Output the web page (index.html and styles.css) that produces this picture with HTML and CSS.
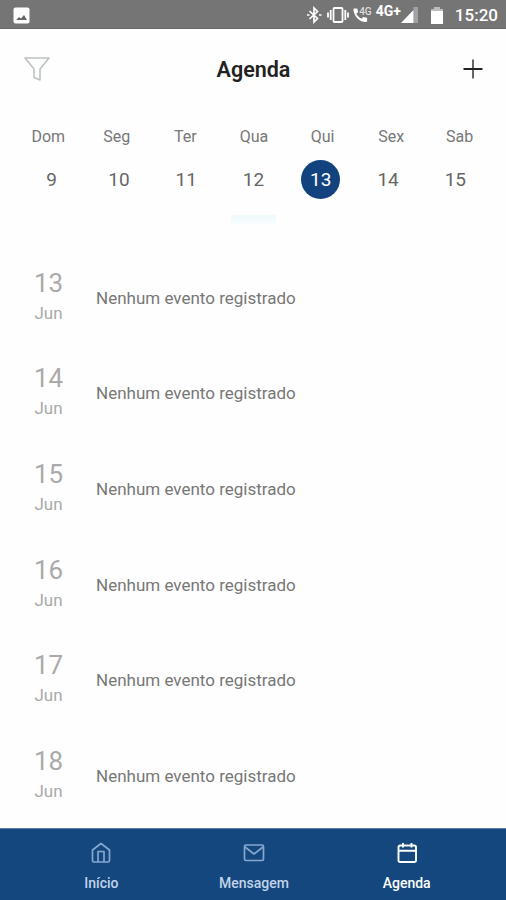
FILE: index.html
```html
<!DOCTYPE html>
<html lang="pt-BR">
<head>
	<meta charset="UTF-8">
	<meta name="viewport" content="width=device-width, initial-scale=1.0">
	<title>Agenda</title>
	<link rel="stylesheet" href="styles.css">
</head>
<body>
	<div class="app">
		<div class="status-bar">
			<svg class="icon-image" width="17" height="17" viewBox="0 0 17 17">
				<rect x="0.5" y="0.5" width="16" height="16" rx="2" fill="#fff"/>
				<path d="M3 13l3-3 2 1.500 3-3.500 3 5z" fill="#666"/>
			</svg>
			<svg class="icon-bluetooth" width="16" height="18" viewBox="0 0 16 18" fill="none" stroke="#fff" stroke-width="1.7">
				<path d="M3.5 5l8 7.5L8 16V2l3.500 3.500-8 7.500"/>
				<path d="M1 9h2.500M13 9h2.500"/>
			</svg>
			<svg class="icon-vibrate" width="22" height="18" viewBox="0 0 22 18" fill="none" stroke="#fff" stroke-width="1.8">
				<rect x="6.500" y="2" width="9" height="14" rx="1"/>
				<path d="M3.700 4v10M18.300 4v10M1 6.500v5M21 6.500v5"/>
			</svg>
			<svg class="icon-call" width="16" height="16" viewBox="0 0 17 17">
				<path d="M1.500 1.500h3l1 4-2 1.500c1.200 2.600 3 4.400 5.500 5.500l1.800-2 4.200 1v3c0 1-.6 1.500-1.500 1.500C6.500 16 1 9.500.5 3c0-1 .3-1.500 1-1.500z" fill="#fff"/>
			</svg>
			<span class="call-type">4G</span>
			<span class="network">4G+</span>
			<svg class="icon-signal" width="17" height="16" viewBox="0 0 17 16">
				<path d="M12.500 0H17v16h-4.500z" fill="#a2a2a2"/>
				<path d="M0 16L12.500 3v13z" fill="#fff"/>
			</svg>
			<svg class="icon-battery" width="12" height="17" viewBox="0 0 12 17">
				<path d="M3.500 0h5v2H12v15H0V2h3.500z" fill="#fff"/>
				<path d="M3.500 0h5v2H12v2H0V2h3.500z" fill="#bdbdbd"/>
			</svg>
			<span class="clock">15:20</span>
		</div>

		<header class="header">
			<svg class="icon-filter" width="26" height="24" viewBox="0 0 26 24" fill="none" stroke="#bcc1c2" stroke-width="1.6" stroke-linejoin="round">
				<path d="M1 1h24l-9 11v11l-6-2.500V12z"/>
			</svg>
			<h1 class="title">Agenda</h1>
			<svg class="icon-add" width="20" height="20" viewBox="0 0 20 20" fill="none" stroke-width="2">
				<path d="M10 0.500v19" stroke="#666"/>
				<path d="M0.500 10h19" stroke="#222"/>
			</svg>
		</header>

		<div class="weekdays">
			<span>Dom</span><span>Seg</span><span>Ter</span><span>Qua</span><span>Qui</span><span>Sex</span><span>Sab</span>
		</div>
		<div class="dates">
			<span class="date">9</span>
			<span class="date">10</span>
			<span class="date">11</span>
			<span class="date">12</span>
			<span class="date selected">13</span>
			<span class="date">14</span>
			<span class="date">15</span>
		</div>
		<div class="knob"></div>

		<main class="events">
			<div class="event">
				<div class="day"><span class="number">13</span><span class="month">Jun</span></div>
				<p class="message">Nenhum evento registrado</p>
			</div>
			<div class="event">
				<div class="day"><span class="number">14</span><span class="month">Jun</span></div>
				<p class="message">Nenhum evento registrado</p>
			</div>
			<div class="event">
				<div class="day"><span class="number">15</span><span class="month">Jun</span></div>
				<p class="message">Nenhum evento registrado</p>
			</div>
			<div class="event">
				<div class="day"><span class="number">16</span><span class="month">Jun</span></div>
				<p class="message">Nenhum evento registrado</p>
			</div>
			<div class="event">
				<div class="day"><span class="number">17</span><span class="month">Jun</span></div>
				<p class="message">Nenhum evento registrado</p>
			</div>
			<div class="event">
				<div class="day"><span class="number">18</span><span class="month">Jun</span></div>
				<p class="message">Nenhum evento registrado</p>
			</div>
		</main>

		<nav class="tabs">
			<a class="tab">
				<svg width="22" height="22" viewBox="0 0 22 22" fill="none" stroke="currentColor" stroke-width="1.7" stroke-linejoin="round">
					<path d="M2.500 8L11 1.500 19.500 8v10.500q0 1.500-1.500 1.500H4q-1.500 0-1.500-1.500z"/>
					<path d="M8 20v-10.500h6V20"/>
				</svg>
				<span class="label">Início</span>
			</a>
			<a class="tab">
				<svg width="22" height="22" viewBox="0 0 22 22" fill="none" stroke="currentColor" stroke-width="1.7" stroke-linejoin="round">
					<rect x="1.500" y="3" width="19" height="15.500" rx="1.500"/>
					<path d="M2 5l9 7 9-7"/>
				</svg>
				<span class="label">Mensagem</span>
			</a>
			<a class="tab active">
				<svg width="22" height="22" viewBox="0 0 22 22" fill="none" stroke="currentColor" stroke-width="1.900" stroke-linejoin="round">
					<rect x="2.500" y="3.500" width="17.500" height="16.500" rx="1.800"/>
					<path d="M2.500 8.700H20M7 1v4.500M15.500 1v4.500"/>
				</svg>
				<span class="label">Agenda</span>
			</a>
		</nav>
	</div>
</body>
</html>
```

FILE: styles.css
```css
* {
	margin: 0;
	padding: 0;
	box-sizing: border-box;
}

body {
	font-family: Roboto, "Liberation Sans", sans-serif;
	background: #fefefe;
	color: #222;
}

svg {
	display: block;
	flex-shrink: 0;
}

.app {
	width: 506px;
	height: 900px;
	display: flex;
	flex-direction: column;
	overflow: hidden;
}

/* status bar */
.status-bar {
	height: 29px;
	flex-shrink: 0;
	display: flex;
	align-items: center;
	padding: 2px 8px 0 13px;
	background: #757575;
	border-bottom: 1px solid #666;
	color: #fff;
}

.icon-bluetooth {
	margin-left: auto;
}

.icon-vibrate {
	margin-left: 5px;
}

.icon-call {
	margin-left: 4px;
}

.call-type {
	margin: 0 0 7px -10px;
	font-size: 10px;
	font-weight: 500;
	color: #ddd;
}

.network {
	margin: 0 0 9px 4px;
	font-size: 14px;
	font-weight: 700;
	line-height: 16px;
}

.icon-battery {
	margin: 0 12px 0 13px;
}

.clock {
	font-size: 17px;
	font-weight: 500;
}

/* header */
.header {
	height: 80px;
	flex-shrink: 0;
	display: flex;
	align-items: center;
	justify-content: space-between;
	padding: 0 23px 0 24px;
}

.title {
	margin-right: 6px;
	font-size: 21.5px;
	font-weight: 600;
}

/* week strip */
.weekdays,
.dates {
	display: grid;
	grid-template-columns: repeat(7, 1fr);
	flex-shrink: 0;
	text-align: center;
}

.weekdays {
	height: 51px;
	padding: 17px 12px 0 14px;
	font-size: 16px;
	line-height: 22px;
	color: #777;
}

.dates {
	height: 39px;
	padding: 0 17px 0 18px;
	justify-items: center;
}

.date {
	width: 39px;
	height: 39px;
	line-height: 39px;
	font-size: 19px;
	color: #666;
}

.date.selected {
	border-radius: 50%;
	background: #13437f;
	color: #fff;
}

.knob {
	width: 45px;
	height: 9px;
	margin: 16px auto 26px;
	flex-shrink: 0;
	background: linear-gradient(#eff9fb, #f8fdfe);
}

/* events */
.events {
	flex: 1;
	overflow: hidden;
}

.event {
	height: 95.6px;
	display: flex;
	align-items: center;
}

.day {
	width: 97px;
	margin-right: -1px;
	display: flex;
	flex-direction: column;
	align-items: center;
	color: #aaa;
}

.number {
	font-size: 26px;
	line-height: 30px;
}

.month {
	font-size: 17px;
	line-height: 30px;
}

.message {
	font-size: 17px;
	color: #777;
}

/* bottom tabs */
.tabs {
	height: 72px;
	flex-shrink: 0;
	display: flex;
	padding: 0 23px 0 25px;
	background: #13477e;
	border-top: 1px solid #5c7da4;
}

.tab {
	flex: 1;
	display: flex;
	flex-direction: column;
	align-items: center;
	padding-top: 13px;
	color: #87a7cf;
}

.label {
	margin-top: 10px;
	font-size: 14px;
	font-weight: 500;
	line-height: 18px;
	color: #c2d3ea;
}

.tab.active,
.tab.active .label {
	color: #fff;
}
```
